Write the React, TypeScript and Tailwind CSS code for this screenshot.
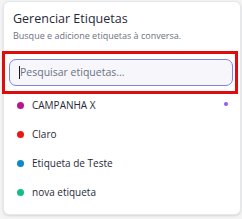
const TAGS = [
  { name: "CAMPANHA X", color: "bg-[#b8168f]", selected: true },
  { name: "Claro", color: "bg-[#ee1515]", selected: false },
  { name: "Etiqueta de Teste", color: "bg-[#0e88c6]", selected: false },
  { name: "nova etiqueta", color: "bg-[#15bd84]", selected: false },
];

export default function App() {
  return (
    <div className="h-[219px] w-[242px] overflow-hidden bg-[#f4f4f5] pl-[3px] pt-px font-['Open_Sans','Noto_Sans',sans-serif]">
      <div className="h-[214px] w-[238px] rounded-md border border-[#e5e7eb] bg-white shadow-sm">
        <div className="px-[9px] pt-[9px]">
          <h1 className="text-[12.5px] leading-[16px] font-medium text-[#1f2937]">Gerenciar Etiquetas</h1>
          <p className="mt-[3px] text-[9px] leading-[12px] text-[#6b7280]">Busque e adicione etiquetas à conversa.</p>
        </div>
        <div className="ml-[-2px] mt-[9px] w-[236px] border-[3px] border-[#e00b0b] pb-[5px] pl-[4px] pr-[2px] pt-[5px]">
          <div className="flex h-[27px] items-center rounded-[7px] border-[1.5px] border-[#8680e6] bg-[#f6f6fb] px-[9px]">
            <span className="h-[13px] w-px bg-[#111827]" />
            <span className="text-[10.5px] text-[#6b7280]">Pesquisar etiquetas...</span>
          </div>
        </div>
        <ul className="flex flex-col gap-[9px] pt-px">
          {TAGS.map((tag) => (
            <li key={tag.name} className="flex h-[20px] items-center pl-[13px] pr-[12px]">
              <span className={`h-[7px] w-[7px] rounded-full ${tag.color}`} />
              <span className="ml-[8px] flex-1 text-[10px] text-[#1f2937]">{tag.name}</span>
              {tag.selected && <span className="mb-[2px] h-[4px] w-[4px] rounded-full bg-[#8b5cf6]" />}
            </li>
          ))}
        </ul>
      </div>
    </div>
  );
}
